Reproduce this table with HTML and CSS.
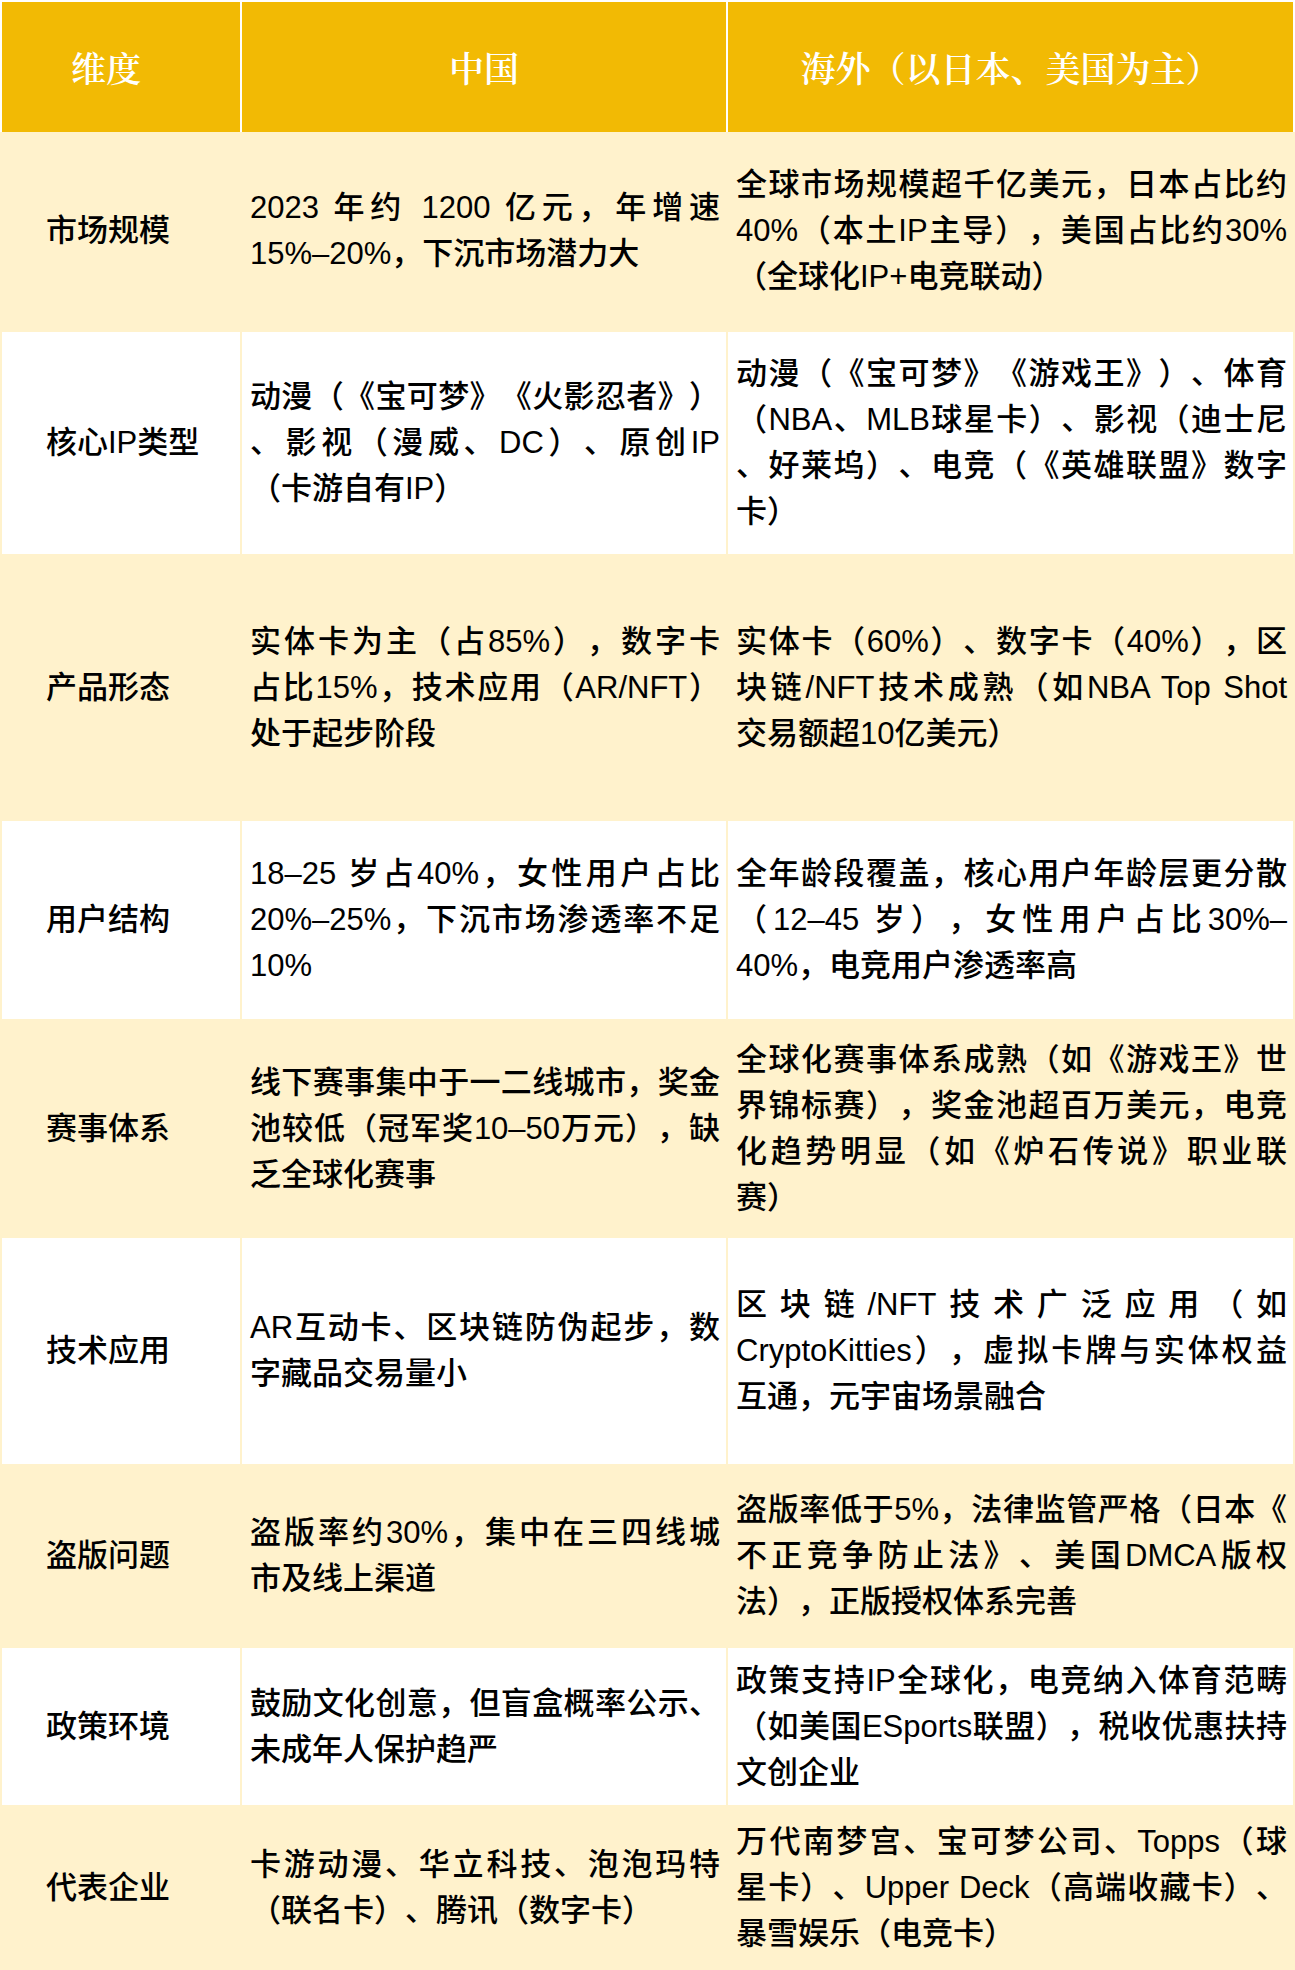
FILE: index.html
```html
<!DOCTYPE html>
<html lang="zh-CN">
<head>
<meta charset="utf-8">
<title>中国与海外卡牌市场对比</title>
<link rel="stylesheet" href="styles.css">
</head>
<body>
<table class="cmp">
  <colgroup>
    <col class="c1">
    <col class="c2">
    <col class="c3">
  </colgroup>
  <thead>
    <tr class="head">
      <th class="h1">维度</th>
      <th>中国</th>
      <th>海外（以日本、美国为主）</th>
    </tr>
  </thead>
  <tbody>
    <tr class="r1 alt">
      <td class="dim">市场规模</td>
      <td><span class="ln">2023 年约 1200 亿元，年增速</span><span class="ln">15%–20%，下沉市场潜力大</span></td>
      <td><span class="ln">全球市场规模超千亿美元，日本占比约</span><span class="ln">40%（本土IP主导），美国占比约30%</span><span class="ln">（全球化IP+电竞联动）</span></td>
    </tr>
    <tr class="r2">
      <td class="dim">核心IP类型</td>
      <td><span class="ln">动漫（《宝可梦》《火影忍者》）</span><span class="ln">、影视（漫威、DC）、原创IP</span><span class="ln">（卡游自有IP）</span></td>
      <td><span class="ln">动漫（《宝可梦》《游戏王》）、体育</span><span class="ln">（NBA、MLB球星卡）、影视（迪士尼</span><span class="ln">、好莱坞）、电竞（《英雄联盟》数字</span><span class="ln">卡）</span></td>
    </tr>
    <tr class="r3 alt">
      <td class="dim">产品形态</td>
      <td><span class="ln">实体卡为主（占85%），数字卡</span><span class="ln">占比15%，技术应用（AR/NFT）</span><span class="ln">处于起步阶段</span></td>
      <td><span class="ln">实体卡（60%）、数字卡（40%），区</span><span class="ln">块链/NFT技术成熟（如NBA Top Shot</span><span class="ln">交易额超10亿美元）</span></td>
    </tr>
    <tr class="r4">
      <td class="dim">用户结构</td>
      <td><span class="ln">18–25 岁占40%，女性用户占比</span><span class="ln">20%–25%，下沉市场渗透率不足</span><span class="ln">10%</span></td>
      <td><span class="ln">全年龄段覆盖，核心用户年龄层更分散</span><span class="ln">（12–45 岁），女性用户占比30%–</span><span class="ln">40%，电竞用户渗透率高</span></td>
    </tr>
    <tr class="r5 alt">
      <td class="dim">赛事体系</td>
      <td><span class="ln">线下赛事集中于一二线城市，奖金</span><span class="ln">池较低（冠军奖10–50万元），缺</span><span class="ln">乏全球化赛事</span></td>
      <td><span class="ln">全球化赛事体系成熟（如《游戏王》世</span><span class="ln">界锦标赛），奖金池超百万美元，电竞</span><span class="ln">化趋势明显（如《炉石传说》职业联</span><span class="ln">赛）</span></td>
    </tr>
    <tr class="r6">
      <td class="dim">技术应用</td>
      <td><span class="ln">AR互动卡、区块链防伪起步，数</span><span class="ln">字藏品交易量小</span></td>
      <td><span class="ln">区块链/NFT技术广泛应用（如</span><span class="ln">CryptoKitties），虚拟卡牌与实体权益</span><span class="ln">互通，元宇宙场景融合</span></td>
    </tr>
    <tr class="r7 alt">
      <td class="dim">盗版问题</td>
      <td><span class="ln">盗版率约30%，集中在三四线城</span><span class="ln">市及线上渠道</span></td>
      <td><span class="ln">盗版率低于5%，法律监管严格（日本《</span><span class="ln">不正竞争防止法》、美国DMCA版权</span><span class="ln">法），正版授权体系完善</span></td>
    </tr>
    <tr class="r8">
      <td class="dim">政策环境</td>
      <td><span class="ln">鼓励文化创意，但盲盒概率公示、</span><span class="ln">未成年人保护趋严</span></td>
      <td><span class="ln">政策支持IP全球化，电竞纳入体育范畴</span><span class="ln">（如美国ESports联盟），税收优惠扶持</span><span class="ln">文创企业</span></td>
    </tr>
    <tr class="r9 alt">
      <td class="dim">代表企业</td>
      <td><span class="ln">卡游动漫、华立科技、泡泡玛特</span><span class="ln">（联名卡）、腾讯（数字卡）</span></td>
      <td><span class="ln">万代南梦宫、宝可梦公司、Topps（球</span><span class="ln">星卡）、Upper Deck（高端收藏卡）、</span><span class="ln">暴雪娱乐（电竞卡）</span></td>
    </tr>
  </tbody>
</table>
</body>
</html>
```

FILE: styles.css
```css
html, body {
  margin: 0;
  padding: 0;
  background: #ffffff;
}

.cmp {
  width: 1295px;
  table-layout: fixed;
  border-collapse: separate;
  border-spacing: 0;
  font-family: "Liberation Sans", "Noto Sans CJK SC", sans-serif;
  font-size: 31px;
  font-weight: 500;
  line-height: 46px;
  color: #000000;
  text-spacing-trim: space-all;
}

.c1 { width: 242px; }
.c2 { width: 486px; }
.c3 { width: 567px; }

.head { height: 132px; }

.head th {
  background: #f2ba04;
  color: #ffffff;
  font-family: "Noto Serif CJK SC", "Noto Sans CJK SC", serif;
  font-weight: 600;
  font-size: 35px;
  text-align: center;
  vertical-align: middle;
  padding: 0;
  border-top: 2px solid #ffffff;
  border-right: 2px solid #ffffff;
}

.head th.h1 {
  border-left: 2px solid #ffffff;
  padding-right: 30px;
}

tbody td {
  background: #ffffff;
  vertical-align: middle;
  padding: 0 6px 0 8px;
  border-right: 2px solid #fff2cc;
  border-bottom: 2px solid #fff2cc;
}

tbody tr.alt td { background: #fff2cc; }

tbody td.dim {
  border-left: 2px solid #fff2cc;
  padding-left: 44px;
  padding-right: 0;
  white-space: nowrap;
}

.ln {
  display: block;
  text-align: justify;
  text-align-last: justify;
}

.ln:last-child { text-align-last: left; }

.r1 { height: 200px; }
.r2 { height: 224px; }
.r3 { height: 265px; }
.r4 { height: 200px; }
.r5 { height: 217px; }
.r6 { height: 228px; }
.r7 { height: 182px; }
.r8 { height: 159px; }
.r9 { height: 163px; }
```
